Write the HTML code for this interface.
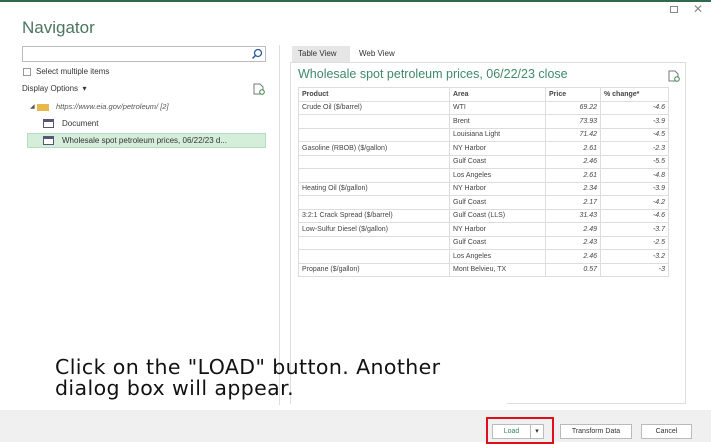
<!DOCTYPE html>
<html><head><meta charset="utf-8"><style>
*{margin:0;padding:0;box-sizing:border-box}
body{width:711px;height:442px;position:relative;background:#fff;font-family:"Liberation Sans",sans-serif;overflow:hidden;color:#333}
.a{position:absolute}
table{border-collapse:collapse;position:absolute;left:298px;top:87px;font-size:7px;color:#444}
td{border:1px solid #ddd;height:13.5px;padding:0 3px;white-space:nowrap}
td.n{text-align:right;font-style:italic}
.btn{position:absolute;top:424px;height:15px;border:1px solid #bbb;background:#fff;font-size:7px;text-align:center;line-height:13px;color:#333}
</style></head><body>
<div class="a" style="left:0;top:0;width:711px;height:2px;background:#2e6b4a"></div>
<div class="a" style="left:670px;top:6px;width:8px;height:7px;border:1px solid #888"></div>
<div class="a" style="left:693px;top:2px;font-size:12px;color:#888">✕</div>
<div class="a" style="left:22px;top:18px;font-size:17px;color:#4c7463">Navigator</div>
<div class="a" style="left:22px;top:46px;width:244px;height:16px;border:1px solid #bbb"></div>
<svg class="a" style="left:251px;top:48px" width="12" height="12"><circle cx="7" cy="5" r="3.5" fill="none" stroke="#2a5a9a" stroke-width="1.3"/><path d="M4.5 7.5L1.5 10.5" stroke="#2a5a9a" stroke-width="1.5"/></svg>
<div class="a" style="left:23px;top:68px;width:8px;height:8px;border:1px solid #999"></div>
<div class="a" style="left:36px;top:67px;font-size:8px">Select multiple items</div>
<div class="a" style="left:22px;top:84px;font-size:8px">Display Options &nbsp;▾</div>
<svg class="a" style="left:253px;top:83px" width="12" height="12"><path d="M1 1h6l3 3v7H1z" fill="none" stroke="#777"/><circle cx="9" cy="9" r="2.3" fill="#fff" stroke="#3a8a4a"/></svg>
<div class="a" style="left:30px;top:103px;font-size:6px;color:#555">◢</div>
<div class="a" style="left:37px;top:104px;width:12px;height:7px;background:#e8b84a"></div>
<div class="a" style="left:56px;top:102px;font-size:7.5px;font-style:italic;color:#555">https://www.eia.gov/petroleum/ [2]</div>
<div class="a" style="left:43px;top:119px;width:11px;height:9px;border:1px solid #557;background:linear-gradient(#557 0 2px,#fff 2px)"></div>
<div class="a" style="left:62px;top:119px;font-size:8px">Document</div>
<div class="a" style="left:27px;top:133px;width:239px;height:15px;background:#d5eddb;border:1px solid #b6dcc0"></div>
<div class="a" style="left:43px;top:136px;width:11px;height:9px;border:1px solid #557;background:linear-gradient(#557 0 2px,#fff 2px)"></div>
<div class="a" style="left:62px;top:136px;font-size:8px">Wholesale spot petroleum prices, 06/22/23 d...</div>
<div class="a" style="left:279px;top:45px;width:1px;height:360px;background:#ddd"></div>
<div class="a" style="left:292px;top:46px;width:58px;height:16px;background:#e6e6e6"></div>
<div class="a" style="left:298px;top:49px;font-size:8px">Table View</div>
<div class="a" style="left:359px;top:49px;font-size:8px">Web View</div>
<div class="a" style="left:290px;top:62px;width:396px;height:342px;border:1px solid #ddd;border-bottom:none"></div>
<div class="a" style="left:507px;top:403px;width:179px;height:1px;background:#ddd"></div>
<div class="a" style="left:298px;top:67px;font-size:12.5px;color:#3f8a6a">Wholesale spot petroleum prices, 06/22/23 close</div>
<svg class="a" style="left:668px;top:70px" width="12" height="12"><path d="M1 1h6l3 3v7H1z" fill="none" stroke="#777"/><circle cx="9" cy="9" r="2.3" fill="#fff" stroke="#3a8a4a"/></svg>
<table>
<tr style="font-weight:bold"><td style="width:151px">Product</td><td style="width:96px">Area</td><td style="width:55px">Price</td><td style="width:68px">% change*</td></tr>
<tr><td>Crude Oil ($/barrel)</td><td>WTI</td><td class="n">69.22</td><td class="n">-4.6</td></tr>
<tr><td></td><td>Brent</td><td class="n">73.93</td><td class="n">-3.9</td></tr>
<tr><td></td><td>Louisiana Light</td><td class="n">71.42</td><td class="n">-4.5</td></tr>
<tr><td>Gasoline (RBOB) ($/gallon)</td><td>NY Harbor</td><td class="n">2.61</td><td class="n">-2.3</td></tr>
<tr><td></td><td>Gulf Coast</td><td class="n">2.46</td><td class="n">-5.5</td></tr>
<tr><td></td><td>Los Angeles</td><td class="n">2.61</td><td class="n">-4.8</td></tr>
<tr><td>Heating Oil ($/gallon)</td><td>NY Harbor</td><td class="n">2.34</td><td class="n">-3.9</td></tr>
<tr><td></td><td>Gulf Coast</td><td class="n">2.17</td><td class="n">-4.2</td></tr>
<tr><td>3:2:1 Crack Spread ($/barrel)</td><td>Gulf Coast (LLS)</td><td class="n">31.43</td><td class="n">-4.6</td></tr>
<tr><td>Low-Sulfur Diesel ($/gallon)</td><td>NY Harbor</td><td class="n">2.49</td><td class="n">-3.7</td></tr>
<tr><td></td><td>Gulf Coast</td><td class="n">2.43</td><td class="n">-2.5</td></tr>
<tr><td></td><td>Los Angeles</td><td class="n">2.46</td><td class="n">-3.2</td></tr>
<tr><td>Propane ($/gallon)</td><td>Mont Belvieu, TX</td><td class="n">0.57</td><td class="n">-3</td></tr>
</table>
<div class="a" style="left:55px;top:357px;font-family:'DejaVu Sans',sans-serif;font-size:20.5px;letter-spacing:0.4px;line-height:21px;color:#111;white-space:nowrap">Click on the "LOAD" button. Another<br>dialog box will appear.</div>
<div class="a" style="left:0;top:410px;width:711px;height:32px;background:#f0f0f0"></div>
<div class="btn" style="left:492px;width:39px;color:#3a8a5a">Load</div>
<div class="btn" style="left:530px;width:14px">▾</div>
<div class="btn" style="left:560px;width:72px">Transform Data</div>
<div class="btn" style="left:641px;width:51px">Cancel</div>
<div class="a" style="left:486px;top:417px;width:68px;height:27px;border:2px solid #e0101a"></div>
</body></html>
